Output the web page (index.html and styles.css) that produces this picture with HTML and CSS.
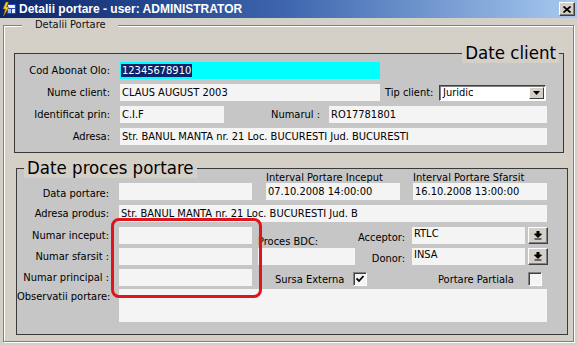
FILE: index.html
```html
<!DOCTYPE html>
<html lang="ro">
<head>
    <meta charset="UTF-8">
    <meta name="viewport" content="width=device-width, initial-scale=1.0">
    <title>Detalii portare</title>
    <link rel="stylesheet" href="styles.css">
</head>
<body>
<div class="window">
    <div class="titlebar">
        <svg class="app-icon" width="14" height="14" viewBox="0 0 14 14">
            <rect x="5" y="2" width="9" height="10" fill="#2448b8"/>
            <rect x="6" y="3" width="7" height="3" fill="#e8f0ff"/>
            <rect x="6" y="7" width="3" height="4" fill="#9fc0ff"/>
            <rect x="10" y="7" width="3" height="4" fill="#e8f0ff"/>
            <path d="M4 0 L1 7 L3.5 7 L1.5 14 L7 5 L4.5 5 L6.5 0 Z" fill="#f8d020" stroke="#a06000" stroke-width="0.5"/>
        </svg>
        <span class="title">Detalii portare - user: ADMINISTRATOR</span>
        <span class="close-btn">
            <svg width="8" height="7" viewBox="0 0 8 7"><path d="M0.5 0.5 L7.5 6.5 M7.5 0.5 L0.5 6.5" stroke="#000" stroke-width="1.8"/></svg>
        </span>
    </div>

    <div class="frame">
        <span class="frame-title">Detalii Portare</span>

        <!-- date client -->
        <div class="panel client">
            <span class="panel-title at-right">Date client</span>
            <div class="row">
                <span class="lbl">Cod Abonat Olo:</span>
                <div class="field cyan w260"><span class="selected">12345678910</span></div>
            </div>
            <div class="row">
                <span class="lbl">Nume client:</span>
                <div class="field w260">CLAUS AUGUST 2003</div>
                <span class="lbl-tip">Tip client:</span>
                <div class="select">
                    <span class="select-text">Juridic</span>
                    <span class="select-btn">
                        <svg width="7" height="4" viewBox="0 0 7 4"><path d="M0 0 H7 L3.5 4 Z" fill="#000"/></svg>
                    </span>
                </div>
            </div>
            <div class="row">
                <span class="lbl">Identificat prin:</span>
                <div class="field w104">C.I.F</div>
                <span class="lbl lbl-nr">Numarul :</span>
                <div class="field w218">RO17781801</div>
            </div>
            <div class="row">
                <span class="lbl">Adresa:</span>
                <div class="field w427">Str. BANUL MANTA nr. 21 Loc. BUCURESTI Jud. BUCURESTI</div>
            </div>
        </div>

        <!-- date proces portare -->
        <div class="panel proces">
            <span class="panel-title at-left">Date proces portare</span>
            <div class="row row-top">
                <span class="lbl lbl-p">Data portare:</span>
                <div class="field w133"></div>
                <div class="interval first">
                    <span class="caption">Interval Portare Inceput</span>
                    <div class="field">07.10.2008 14:00:00</div>
                </div>
                <div class="interval">
                    <span class="caption">Interval Portare Sfarsit</span>
                    <div class="field">16.10.2008 13:00:00</div>
                </div>
            </div>
            <div class="row">
                <span class="lbl lbl-p">Adresa produs:</span>
                <div class="field w428">Str. BANUL MANTA nr. 21 Loc. BUCURESTI Jud. B</div>
            </div>
            <div class="grid">
                <span class="lbl lbl-p c1">Numar inceput:</span>
                <div class="field c2"></div>
                <span class="lbl-bdc c4">Proces BDC:</span>
                <span class="lbl-side c5">Acceptor:</span>
                <div class="field top c6">RTLC</div>
                <span class="btn c8"><svg width="8" height="9" viewBox="0 0 8 9"><path d="M3 0 H5 V3 H7.5 L4 6.5 L0.5 3 H3 Z M0.5 8 H7.5" fill="#000" stroke="#000" stroke-width="1"/></svg></span>

                <span class="lbl lbl-p c1">Numar sfarsit :</span>
                <div class="field c2"></div>
                <div class="field c4"></div>
                <span class="lbl-side c5">Donor:</span>
                <div class="field top c6">INSA</div>
                <span class="btn c8"><svg width="8" height="9" viewBox="0 0 8 9"><path d="M3 0 H5 V3 H7.5 L4 6.5 L0.5 3 H3 Z M0.5 8 H7.5" fill="#000" stroke="#000" stroke-width="1"/></svg></span>

                <span class="lbl lbl-p c1">Numar principal :</span>
                <div class="field c2"></div>
                <div class="flags">
                    <span class="flag-lbl first">Sursa Externa</span>
                    <span class="check">
                        <svg width="8" height="8" viewBox="0 0 8 8"><path d="M0.5 3.5 L3 6 L7.5 1" fill="none" stroke="#000" stroke-width="1.8"/></svg>
                    </span>
                    <span class="flag-lbl second">Portare Partiala</span>
                    <span class="check"></span>
                </div>
            </div>
            <div class="row row-obs">
                <span class="lbl lbl-p">Observatii portare:</span>
                <div class="field area w428"></div>
            </div>
        </div>
    </div>

    <div class="marker"></div>
</div>
</body>
</html>
```

FILE: styles.css
```css
* {
    box-sizing: border-box;
}

body {
    margin: 0;
    font-family: "DejaVu Sans Condensed", "DejaVu Sans", sans-serif;
    font-stretch: condensed;
    font-size: 11px;
    color: #000;
    background: #d4d0c8;
}

.window {
    position: relative;
    width: 577px;
    height: 345px;
    background: #d4d0c8;
    overflow: hidden;
}

.titlebar {
    display: flex;
    align-items: center;
    height: 18px;
    padding: 0 2px;
    background: linear-gradient(to right, #0a246a 0%, #3f67ae 50%, #a6caf0 100%);
}

.app-icon {
    flex: none;
    margin-right: 3px;
}

.title {
    color: #fff;
    font-family: "Liberation Sans", Arial, sans-serif;
    font-stretch: normal;
    font-weight: bold;
    font-size: 12px;
    line-height: 18px;
    white-space: nowrap;
}

.close-btn {
    margin-left: auto;
    width: 16px;
    height: 14px;
    display: flex;
    align-items: center;
    justify-content: center;
    background: #d4d0c8;
    border: 1px solid;
    border-color: #fff #404040 #404040 #fff;
    box-shadow: inset -1px -1px 0 #808080;
}

/* outer group "Detalii Portare" */
.frame {
    position: relative;
    margin: 7px 0 0 3px;
    width: 571px;
    height: 317px;
    border: 1px solid #808080;
    box-shadow: 1px 1px 0 #fff, inset 1px 1px 0 #fff;
    padding: 27px 0 0 10px;
}

.frame-title {
    position: absolute;
    left: 18px;
    top: -7px;
    padding: 0 12px 0 13px;
    line-height: 12px;
    background: #d4d0c8;
    color: #111;
}

.panel {
    position: relative;
    background: #c6c6c6;
    border: 1px solid #3a3a3a;
    display: flex;
    flex-direction: column;
    gap: 5px;
}

.panel-title {
    position: absolute;
    top: -11px;
    padding: 0 3px;
    font-size: 18.5px;
    line-height: 20px;
    background: #d4d0c8;
    color: #000;
}

.panel-title.at-right {
    right: 4px;
}

.panel-title.at-left {
    left: 7px;
}

.client {
    width: 550px;
    height: 100px;
    padding-top: 8px;
}

.proces {
    width: 552px;
    height: 167px;
    margin: 15px 0 0 2px;
    padding-top: 3px;
}

.row {
    display: flex;
    align-items: center;
    height: 17px;
}

.lbl {
    flex: none;
    width: 105px;
    padding-right: 10px;
    text-align: right;
    white-space: nowrap;
}

.lbl-p {
    width: 102px;
    padding-right: 10px;
}

.field {
    flex: none;
    height: 17px;
    line-height: 17px;
    padding: 0 2px;
    background: #f4f4f4;
    white-space: nowrap;
    overflow: hidden;
}

.field.cyan {
    background: #00ffff;
    padding-left: 1px;
}

.selected {
    background: #0a246a;
    color: #fff;
    padding: 0 1px;
}

.field.top {
    line-height: 13px;
}

.w104 { width: 104px; }
.w133 { width: 133px; }
.w218 { width: 218px; }
.w260 { width: 260px; }
.w427 { width: 427px; }
.w428 { width: 428px; }

.lbl-tip {
    flex: none;
    width: 54px;
    margin-left: 5px;
    white-space: nowrap;
}

.lbl-nr {
    width: 105px;
    padding-right: 9px;
}

.select {
    display: flex;
    align-items: center;
    width: 107px;
    height: 16px;
    background: #fff;
    border: 1px solid;
    border-color: #404040 #fff #fff #404040;
    box-shadow: inset 1px 1px 0 #808080;
}

.select-text {
    flex: 1;
    padding-left: 3px;
}

.select-btn {
    width: 15px;
    height: 12px;
    margin-right: 1px;
    display: flex;
    align-items: center;
    justify-content: center;
    background: #d4d0c8;
    border: 1px solid;
    border-color: #fff #404040 #404040 #fff;
}

/* proces portare */
.row-top {
    height: auto;
    align-items: flex-end;
}

.interval {
    display: flex;
    flex-direction: column;
    width: 134px;
    margin-left: 13px;
}

.interval.first {
    margin-left: 14px;
}

.caption {
    line-height: 11px;
    white-space: nowrap;
}

.grid {
    display: grid;
    grid-template-columns: 102px 133px 6px 97px 57px 113px 3px 20px;
    grid-template-rows: 17px 17px 17px;
    row-gap: 4px;
    align-items: center;
    margin-bottom: -1px;
}

.c1 { grid-column: 1; }
.c2 { grid-column: 2; }
.c4 { grid-column: 4; }
.c5 { grid-column: 5; }
.c6 { grid-column: 6; }
.c8 { grid-column: 8; }

.lbl-bdc {
    align-self: end;
    margin-bottom: -4px;
    white-space: nowrap;
}

.lbl-side {
    text-align: right;
    padding: 3px 7px 0 0;
    white-space: nowrap;
}

.btn {
    height: 17px;
    display: flex;
    align-items: center;
    justify-content: center;
    background: #d4d0c8;
    border: 1px solid;
    border-color: #fff #404040 #404040 #fff;
    box-shadow: inset -1px -1px 0 #808080;
}

.flags {
    grid-column: 4 / 9;
    display: flex;
    align-items: center;
    padding-top: 3px;
}

.flag-lbl {
    flex: none;
    white-space: nowrap;
}

.flag-lbl.first {
    width: 95px;
    padding-left: 17px;
}

.flag-lbl.second {
    width: 90px;
    margin-left: 71px;
}

.check {
    flex: none;
    width: 14px;
    height: 14px;
    display: flex;
    align-items: center;
    justify-content: center;
    background: #f4f4f4;
    border: 1px solid;
    border-color: #808080 #fff #fff #808080;
    box-shadow: inset 1px 1px 0 #404040;
}

.row-obs {
    height: 33px;
    align-items: flex-start;
    margin-top: -1px;
}

.row-obs .lbl {
    line-height: 14px;
    padding-top: 1px;
}

.field.area {
    height: 33px;
}

/* red annotation drawn over the number fields */
.marker {
    position: absolute;
    left: 111px;
    top: 218px;
    width: 151px;
    height: 80px;
    border: 3px solid #e0141c;
    border-radius: 8px;
}
```
